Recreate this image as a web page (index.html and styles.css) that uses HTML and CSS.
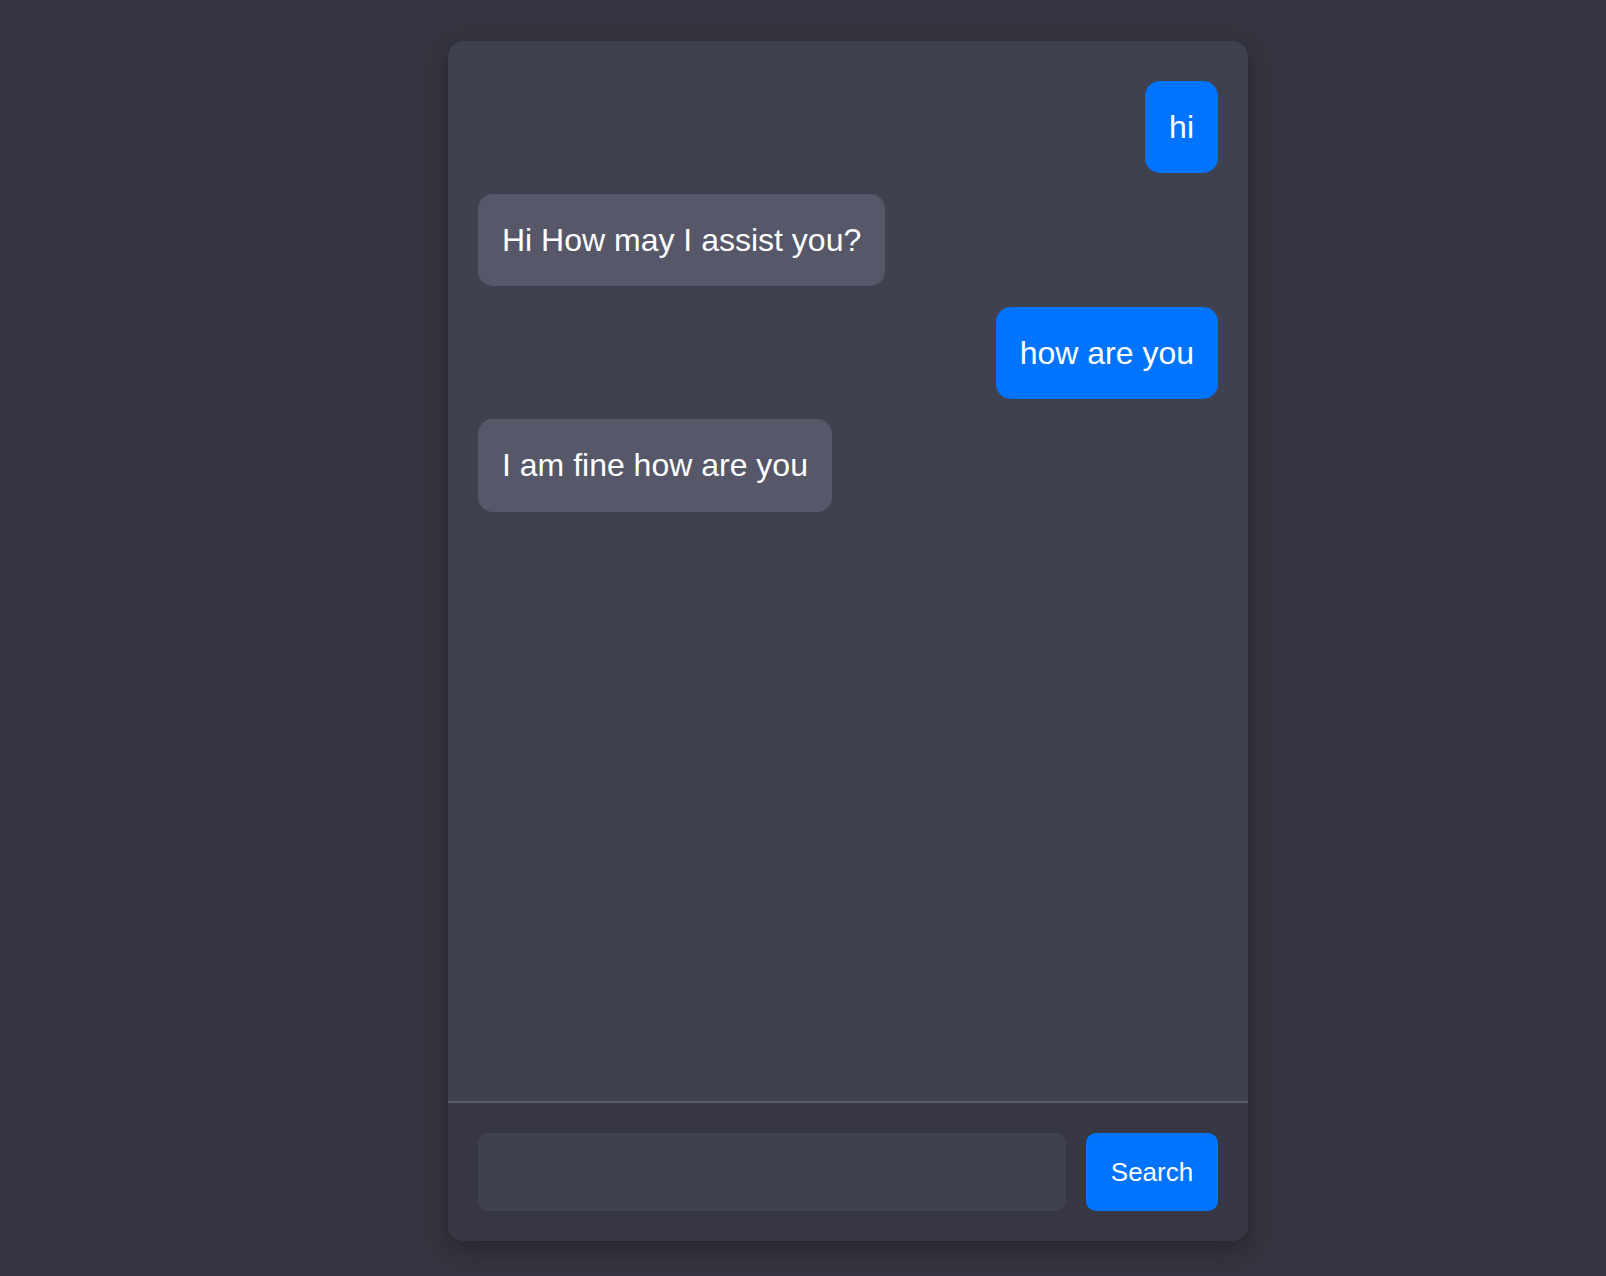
FILE: index.html
```html
<!DOCTYPE html>
<html lang="en">
<head>
<meta charset="utf-8">
<title>Chat</title>
<link rel="stylesheet" href="styles.css">
</head>
<body>
<div class="chat">
  <div class="messages">
    <div class="msg user">hi</div>
    <div class="msg bot">Hi How may I assist you?</div>
    <div class="msg user">how are you</div>
    <div class="msg bot">I am fine how are you</div>
  </div>
  <form class="composer" onsubmit="return false">
    <input class="composer-input" type="text" aria-label="Message">
    <button class="composer-btn" type="submit">Search</button>
  </form>
</div>
</body>
</html>
```

FILE: styles.css
```css
html, body {
  margin: 0;
  padding: 0;
  background: #353541;
  font-family: "Liberation Sans", Arial, Helvetica, sans-serif;
}

body {
  padding: 41px 0 0 448px;
  height: 1276px;
  box-sizing: border-box;
}

.chat {
  width: 800px;
  height: 1200px;
  background: #40414f;
  border-radius: 16px;
  overflow: hidden;
  display: flex;
  flex-direction: column;
  box-shadow: 0 8px 24px rgba(20, 20, 28, 0.45);
}

.messages {
  flex: 1;
  padding: 40px 30px 30px;
  display: flex;
  flex-direction: column;
  align-items: flex-start;
  gap: 20.4px;
}

.msg {
  font-size: 32px;
  line-height: 44.4px;
  padding: 24px 24px;
  border-radius: 15px;
  color: #ffffff;
}

.msg.user {
  align-self: flex-end;
  background: #0074ff;
}

.msg.bot {
  background: #565869;
}

.composer {
  margin: 0;
  border-top: 2px solid #585a6b;
  background: #373743;
  padding: 30px;
  display: flex;
  gap: 20px;
}

.composer-input {
  flex: 1;
  height: 78px;
  box-sizing: border-box;
  border: none;
  outline: none;
  background: #40414f;
  border-radius: 10px;
  color: #fff;
  font-size: 24px;
  padding: 0 20px;
  font-family: inherit;
}

.composer-btn {
  width: 132px;
  height: 78px;
  border: none;
  border-radius: 10px;
  background: #0074ff;
  color: #ffffff;
  font-size: 26px;
  font-family: inherit;
  padding: 0;
}
```
